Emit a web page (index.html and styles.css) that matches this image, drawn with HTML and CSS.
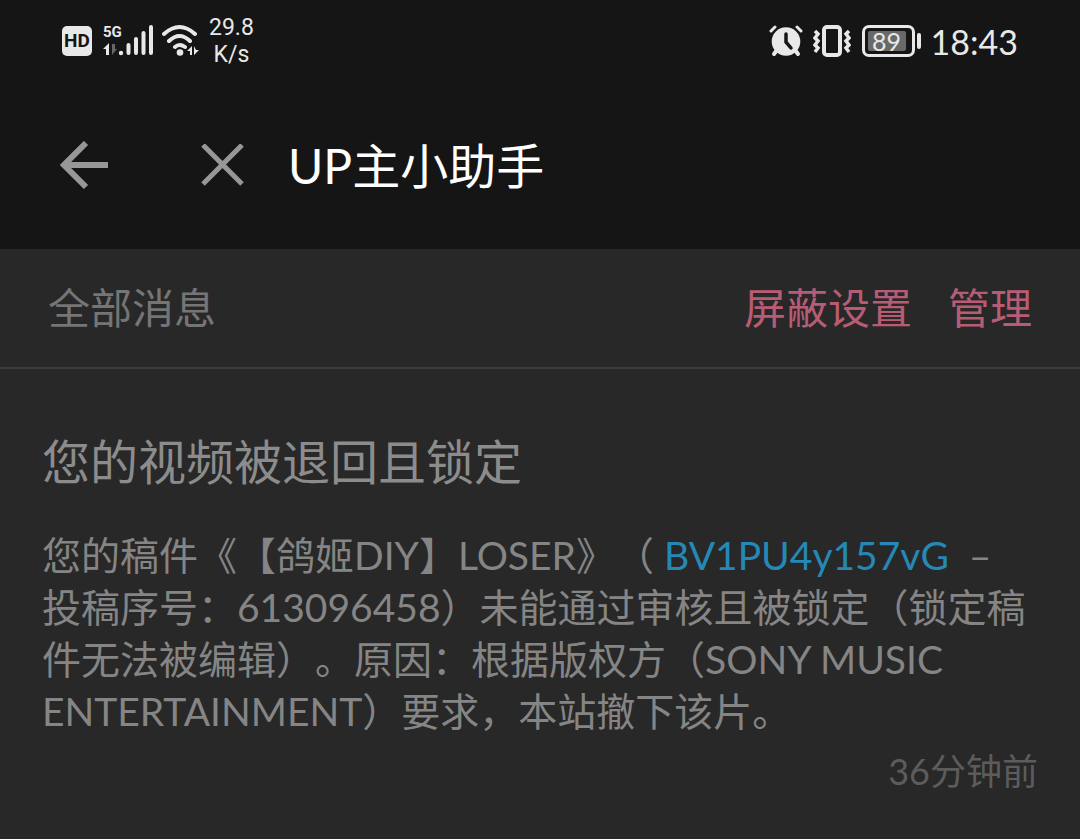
FILE: index.html
```html
<!DOCTYPE html>
<html lang="zh-CN">

<head>
    <meta charset="UTF-8">
    <title>UP主小助手</title>
    <meta name="viewport" content="width=device-width, initial-scale=1.0">
    <link rel="stylesheet" href="styles.css">
</head>

<body>

    <div class="status-bar">
        <div class="status-group">
            <span class="hd">HD</span>

            <!-- 5G signal -->
            <div class="signal">
                <span class="signal-type">5G</span>
                <svg width="50" height="34" viewBox="0 0 50 34">
                    <path d="M0 25l6-6v12h-3v-6z" fill="#e8e8e8"/>
                    <path d="M9 20v11l5-6h-2v-5z" fill="#666"/>
                    <circle cx="18" cy="29" r="2.200" fill="#e8e8e8"/>
                    <path d="M25.500 21v8M33 15v14M40.500 9v20M48 3v26" stroke="#e8e8e8" stroke-width="4" stroke-linecap="round"/>
                </svg>
            </div>

            <!-- wifi -->
            <svg class="wifi" width="38" height="34" viewBox="0 0 38 34">
                <path d="M2 10Q17.500-4 33 10M7 17Q17.500 7 28 17M13 23Q17.500 19 23 23" fill="none" stroke="#e8e8e8" stroke-width="4" stroke-linecap="round"/>
                <circle cx="18" cy="28.500" r="3.300" fill="#e8e8e8"/>
                <path d="M25 27l5-5v9h-2v-4zM32 22v9l5-5h-3z" fill="#e8e8e8"/>
            </svg>

            <div class="speed">29.8<br>K/s</div>
        </div>

        <div class="status-group">
            <!-- alarm -->
            <svg class="alarm" width="34" height="34" viewBox="0 0 34 34">
                <path d="M2 7l4-4M32 7l-4-4" stroke="#e8e8e8" stroke-width="3" stroke-linecap="round"/>
                <path d="M8 26l-3 4M26 26l3 4" stroke="#e8e8e8" stroke-width="4" stroke-linecap="round"/>
                <circle cx="17" cy="17.500" r="14.300" fill="#e8e8e8"/>
                <path d="M17 10v8l5 6" fill="none" stroke="#151515" stroke-width="3.500" stroke-linecap="round"/>
            </svg>

            <!-- vibrate -->
            <svg class="vibrate" width="38" height="34" viewBox="0 0 38 34">
                <rect x="11" y="3" width="16" height="28" rx="3" fill="none" stroke="#e8e8e8" stroke-width="4"/>
                <path d="M2 7l3 3-3 4 3 3-3 4 3 3-3 4M36 7l-3 3 3 4-3 3 3 4-3 3 3 4" fill="none" stroke="#e8e8e8" stroke-width="3.500"/>
            </svg>

            <!-- battery -->
            <div class="battery">
                <div class="battery-body"><span class="battery-level">89</span></div>
                <div class="battery-tip"></div>
            </div>

            <span class="clock">18:43</span>
        </div>
    </div>

    <header>
        <button class="icon-btn" aria-label="返回">
            <svg width="50" height="50" viewBox="0 0 50 50">
                <path d="M26 2L4 24l22 22M5 24h43" fill="none" stroke="#979797" stroke-width="6"/>
            </svg>
        </button>
        <button class="icon-btn close" aria-label="关闭">
            <svg width="44" height="44" viewBox="0 0 44 44">
                <path d="M2 1l39 39M41 1L2 40" fill="none" stroke="#979797" stroke-width="5"/>
            </svg>
        </button>
        <h1>UP主小助手</h1>
    </header>

    <nav>
        <span class="all">全部消息</span>
        <button class="nav-btn">屏蔽设置</button>
        <button class="nav-btn">管理</button>
    </nav>

    <main>
        <article class="message">
            <h2>您的视频被退回且锁定</h2>
            <p>您的稿件《【鸽姬DIY】LOSER》（ <a href="#">BV1PU4y157vG</a> &nbsp;–<br>投稿序号：613096458）未能通过审核且被锁定（锁定稿件无法被编辑）。原因：根据版权方（SONY MUSIC ENTERTAINMENT）要求，本站撤下该片。</p>
            <time>36分钟前</time>
        </article>
    </main>

</body>
</html>
```

FILE: styles.css
```css
* {
    box-sizing: border-box;
    margin: 0;
    padding: 0;
}

body {
    min-height: 100vh;
    background: #282828;
    color: #858585;
    font-family: Lato, "Noto Sans CJK SC", sans-serif;
    text-spacing-trim: space-all;
    text-autospace: no-autospace;
}

button {
    background: none;
    border: none;
    font-family: inherit;
    cursor: pointer;
}

svg {
    display: block;
}

/* status bar */
.status-bar {
    display: flex;
    justify-content: space-between;
    align-items: center;
    height: 82px;
    padding: 0 62px;
    background: #151515;
    color: #e8e8e8;
}

.status-group {
    display: flex;
    align-items: center;
}

.hd {
    width: 30px;
    border-radius: 5px;
    background: #e8e8e8;
    color: #151515;
    font: bold 19px/30px Roboto, sans-serif;
    text-align: center;
}

.signal {
    position: relative;
    margin-left: 11px;
}

.signal-type {
    position: absolute;
    top: -2px;
    left: 0;
    font: bold 15px/20px Roboto, sans-serif;
}

.wifi {
    margin-left: 9px;
}

.speed {
    margin-left: 9px;
    font: 23px/27px Roboto, sans-serif;
    text-align: center;
}

.vibrate {
    margin-left: 10px;
}

.battery {
    display: flex;
    align-items: center;
    gap: 2px;
    margin-left: 11px;
}

.battery-body {
    width: 53px;
    height: 32px;
    padding: 3px;
    border: 3px solid #e8e8e8;
    border-radius: 7px;
}

.battery-level {
    display: block;
    width: 38px;
    border-radius: 2px;
    background: #696969;
    font-size: 25px;
    line-height: 20px;
    text-align: center;
}

.battery-tip {
    width: 4px;
    height: 16px;
    border-radius: 2px;
    background: #e8e8e8;
}

.clock {
    margin-left: 10px;
    font-size: 34px;
}

/* title bar */
header {
    display: flex;
    align-items: center;
    height: 167px;
    padding: 0 60px;
    background: #151515;
}

.close {
    margin-left: 91px;
}

h1 {
    margin-left: 43px;
    padding-bottom: 6px;
    color: #fff;
    font-size: 48px;
    font-weight: normal;
}

/* message filter row */
nav {
    display: flex;
    align-items: center;
    gap: 36px;
    height: 120px;
    padding: 0 48px 6px;
    border-bottom: 2px solid #3a3a3a;
    font-size: 42px;
}

.all {
    margin-right: auto;
    color: #757575;
}

.nav-btn {
    color: #b85c75;
    font-size: 42px;
}

/* message */
.message {
    padding: 58px 42px 40px;
}

h2 {
    color: #8c8c8c;
    font-size: 48px;
    font-weight: normal;
    line-height: 70px;
}

p {
    margin-top: 32px;
    font-size: 39px;
    line-height: 52px;
}

p a {
    color: #2588b6;
    text-decoration: none;
}

time {
    display: block;
    margin-top: 10px;
    color: #5c5c5c;
    font-size: 36px;
    line-height: 48px;
    text-align: right;
}
```
